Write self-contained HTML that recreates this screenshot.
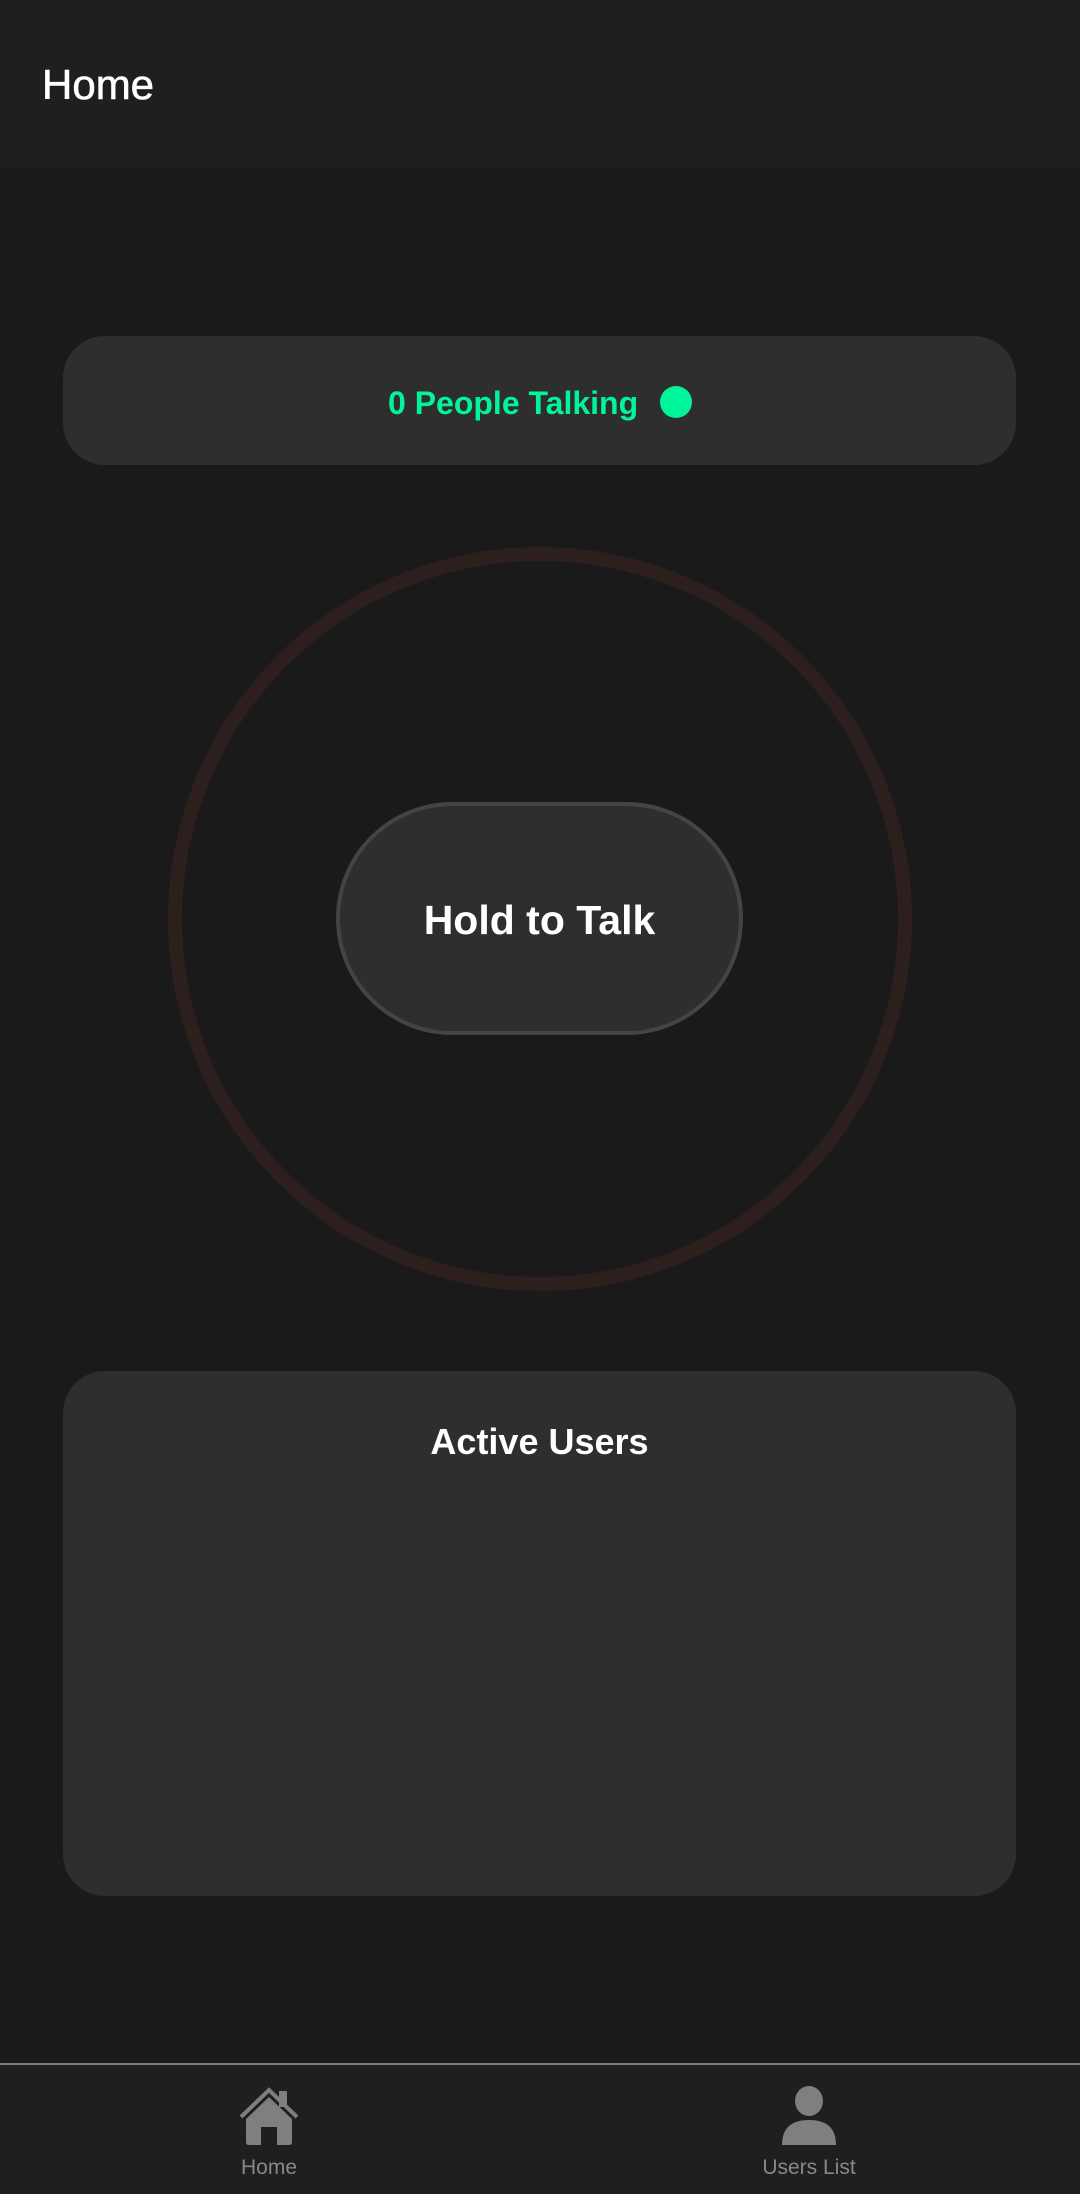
<!DOCTYPE html>
<html><head><meta charset="utf-8"><style>
*{margin:0;padding:0;box-sizing:border-box}
body{width:1080px;height:2194px;background:#1a1a1a;font-family:"Liberation Sans",sans-serif;position:relative;overflow:hidden}
.hdr{position:absolute;left:0;top:0;width:1080px;height:168px;background:#1f1f1f}
.hdr span{position:absolute;left:42px;top:62px;font-size:42px;color:#fff;line-height:46px;-webkit-text-stroke:0.6px #fff}
.card{position:absolute;left:63px;width:953px;background:#2e2e2e;border-radius:42px}
.status{top:336px;height:129px}
.green{position:absolute;top:383px;left:388px;font-size:32px;font-weight:bold;color:#00f59b;line-height:40px;white-space:nowrap}
.dot{position:absolute;left:660px;top:386px;width:32px;height:32px;border-radius:50%;background:#00f59b}
.ring{position:absolute;left:168px;top:547px;width:744px;height:744px;border-radius:50%;border:14px solid #2e1f1f}
.btn{position:absolute;left:336px;top:802px;width:407px;height:233px;border-radius:117px;background:#2e2e2e;border:4px solid #444;color:#fff;font-size:41px;font-weight:bold;display:flex;align-items:center;justify-content:center;padding-top:4px}
.users{top:1371px;height:525px}
.users div{position:absolute;left:0;right:0;top:50px;text-align:center;color:#fff;font-size:36px;font-weight:bold}
.nav{position:absolute;left:0;top:2063px;width:1080px;height:131px;background:#1f1f1f;border-top:2px solid #7a7a7a}
.lbl{position:absolute;top:2156px;font-size:21px;color:#888;width:200px;text-align:center}
</style></head><body>
<div class="hdr"><span>Home</span></div>
<div class="card status"></div>
<div class="green">0 People Talking</div>
<div class="dot"></div>
<div class="ring"></div>
<div class="btn">Hold to Talk</div>
<div class="card users"><div>Active Users</div></div>
<div class="nav"></div>
<svg style="position:absolute;left:237px;top:2086px" width="64" height="60" viewBox="0 0 64 60">
<path d="M4 31 L32 4 L60 31" fill="none" stroke="#7f7f7f" stroke-width="4"/>
<rect x="42" y="5" width="8" height="16" fill="#7f7f7f"/>
<path d="M9 33 L32 11 L55 33 V56 Q55 59 52 59 H40 V41 H24 V59 H12 Q9 59 9 56 Z" fill="#7f7f7f"/>
</svg>
<svg style="position:absolute;left:779px;top:2086px" width="60" height="60" viewBox="0 0 60 60">
<ellipse cx="30" cy="15" rx="14" ry="15" fill="#7f7f7f"/>
<path d="M3 59 Q3 34 30 34 Q57 34 57 59 Z" fill="#7f7f7f"/>
</svg>
<div class="lbl" style="left:169px">Home</div>
<div class="lbl" style="left:709px">Users List</div>
</body></html>
